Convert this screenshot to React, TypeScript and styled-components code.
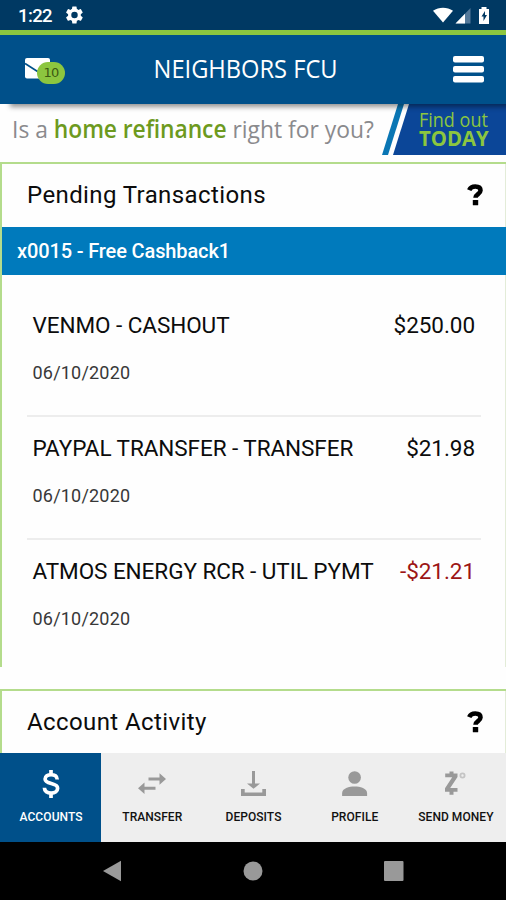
import React from 'react';
import styled, { createGlobalStyle, css } from 'styled-components';

const GlobalStyle = createGlobalStyle`
  * { box-sizing: border-box; }
  body { margin: 0; background: #fff; }
`;

const Screen = styled.div`
  display: flex;
  flex-direction: column;
  width: 506px;
  height: 900px;
  overflow: hidden;
  background: #fefefe;
  color: #0c0c0c;
  font-family: Roboto, sans-serif;
  white-space: nowrap;
`;

const StatusBar = styled.div`
  flex: none;
  height: 30px;
  display: flex;
  align-items: center;
  padding: 2px 15px 0 18px;
  background: #003963;
  color: #fff;
`;

const Clock = styled.span`
  width: 48px;
  font-size: 18.5px;
  line-height: 22px;
  font-weight: 500;
  letter-spacing: -0.6px;
`;

const StatusIcons = styled.div`
  display: flex;
  align-items: center;
  margin-left: auto;
`;

const Header = styled.header`
  flex: none;
  position: relative;
  z-index: 1;
  height: 74px;
  display: grid;
  grid-template-columns: 80px 1fr 100px;
  align-items: center;
  padding: 0 15px 0 25px;
  border-top: 5px solid #8cc63f;
  background: #00508a;
  box-shadow: 7px 6px 5px -3px rgba(0, 0, 0, 0.42);
`;

const Inbox = styled.div`
  position: relative;
  height: 24px;
  width: 40px;
`;

const InboxBadge = styled.span`
  position: absolute;
  left: 12px;
  top: 4px;
  width: 28px;
  height: 22px;
  border-radius: 11px;
  background: #8cc63f;
  color: #3c5a12;
  font: 13px/21px 'DejaVu Sans', sans-serif;
  text-align: center;
  letter-spacing: -0.8px;
`;

const Brand = styled.h1`
  margin: 0 0 4px;
  color: #fff;
  font: 400 26px/32px 'Open Sans', sans-serif;
  transform: translateX(-2.5px) scaleX(0.91);
  justify-self: center;
`;

const MenuButton = styled.button`
  justify-self: end;
  display: flex;
  padding: 0;
  margin-right: 7px;
  border: 0;
  background: none;
`;

const Banner = styled.div`
  flex: none;
  display: flex;
  height: 51px;
  margin-bottom: 7px;
`;

const scaled = css<{ $scale: number }>`
  transform: scaleX(${(p) => p.$scale});
  transform-origin: left;
`;

const BannerText = styled.div<{ $scale: number }>`
  width: 370px;
  padding: 9px 0 0;
  margin-left: 12px;
  color: #8a8a8d;
  font: 400 24.5px/32px 'Open Sans', sans-serif;
  ${scaled}
  b { color: #6d9a1e; font-weight: 600; letter-spacing: -0.1px; }
`;

const BannerStripe = styled.div`
  width: 26px;
  height: 51px;
  margin-right: -15px;
  background: #0a76b4;
  clip-path: polygon(16px 0, 22px 0, 6px 100%, 0 100%);
`;

const BannerCta = styled.div`
  flex: 1;
  display: flex;
  flex-direction: column;
  padding: 7px 0 0 26px;
  background: #0b4698;
  color: #8cc63f;
  clip-path: polygon(16px 0, 100% 0, 100% 100%, 0 100%);
`;

const CtaLine = styled.div<{ $scale: number; $bold?: boolean }>`
  width: max-content;
  font: ${(p) => (p.$bold ? 700 : 400)} ${(p) => (p.$bold ? 22 : 20)}px/17.5px 'Open Sans', sans-serif;
  ${scaled}
`;

const Card = styled.section<{ $height: number; $gap?: number }>`
  flex: none;
  height: ${(p) => p.$height}px;
  margin-top: ${(p) => p.$gap ?? 0}px;
  border: solid #b4dc8c;
  border-width: 2px 0 0 2px;
  box-shadow: inset -1px 0 #e3ecd8;
`;

const CardTitle = styled.div`
  display: flex;
  justify-content: space-between;
  align-items: center;
  height: 63px;
  padding: 0 22px 2px 25px;
`;

const TitleText = styled.h2`
  margin: 0;
  font-size: 24px;
  line-height: 30px;
  font-weight: 400;
  letter-spacing: 0.4px;
`;

const AccountBar = styled.div`
  height: 48px;
  padding: 0 15px;
  background: #007abc;
  color: #fff;
  font-size: 20px;
  line-height: 48px;
  font-weight: 500;
  letter-spacing: -0.13px;
`;

const Transactions = styled.ul`
  list-style: none;
  margin: 18px 25px 0 25px;
  padding: 0;
`;

const Transaction = styled.li`
  height: 123px;
  padding: 19px 6px 0 5.5px;
  & + & { border-top: 2px solid #ededed; padding-top: 18px; }
  &:first-child { height: 122px; }
`;

const TransactionLine = styled.div`
  display: flex;
  justify-content: space-between;
  font-size: 22.5px;
  line-height: 26px;
  letter-spacing: -0.06px;
`;

const Amount = styled.span<{ $negative?: boolean }>`
  letter-spacing: -0.05px;
  ${(p) => p.$negative && 'color: #9c1515;'}
`;

const TransactionDate = styled.div`
  margin-top: 24px;
  color: #383838;
  font-size: 18px;
  line-height: 22px;
  letter-spacing: 0.2px;
`;

const TabBar = styled.nav`
  flex: none;
  display: grid;
  grid-template-columns: repeat(5, 1fr);
  height: 89px;
`;

const Tab = styled.button<{ $active?: boolean }>`
  display: flex;
  flex-direction: column;
  align-items: center;
  padding: 15px 0 0;
  border: 0;
  background: ${(p) => (p.$active ? '#00508a' : '#eee')};
  color: ${(p) => (p.$active ? '#fff' : '#111')};
  font: 500 12px/18px Roboto, sans-serif;
  svg { display: block; margin-bottom: 8px; color: ${(p) => (p.$active ? '#fff' : '#999')}; }
`;

const TabLabel = styled.span<{ $active?: boolean }>`
  margin-left: 1px;
  letter-spacing: ${(p) => (p.$active ? '0.1px' : '0.05px')};
`;

const SystemNav = styled.div`
  flex: none;
  height: 58px;
  display: flex;
  align-items: center;
  justify-content: space-between;
  padding: 0 102.5px 0 102px;
  background: #000;
`;

const Help = () => (
  <svg width="17" height="24" viewBox="0 0 17 24" aria-label="Help">
    <path d="M2.200 7.200C3.400 4.400 5.600 3.500 8.300 3.500c3.200 0 5.200 1.500 5.200 4.100 0 3.400-5 3.700-5 7.200" fill="none" stroke="#000" strokeWidth="4.600" />
    <rect x="5.800" y="17" width="5.400" height="5.300" rx=".6" />
  </svg>
);

const rows = [
  { name: 'VENMO - CASHOUT', amount: '$250.00', date: '06/10/2020' },
  { name: 'PAYPAL TRANSFER - TRANSFER', amount: '$21.98', date: '06/10/2020' },
  { name: 'ATMOS ENERGY RCR - UTIL PYMT', amount: '-$21.21', date: '06/10/2020', negative: true },
];

const tabs = [
  {
    label: 'ACCOUNTS',
    icon: (
      <path d="M24.2 11.5c0-3.3-2.6-4.9-6.1-4.9s-6 1.7-6 4.4c0 6 12.5 3 12.5 9.2 0 3-2.7 4.9-6.4 4.9-4 0-6.8-2-6.8-5.3M18 2V7m0 18v5" fill="none" stroke="currentColor" strokeWidth="3.700" />
    ),
  },
  {
    label: 'TRANSFER',
    icon: (
      <path d="M14.500 9.500h11V5.200L32 11l-6.500 5.800v-4.400h-11zM21.500 21.700h-11V26L4 20.200l6.500-5.800v4.400h11z" fill="currentColor" />
    ),
  },
  {
    label: 'DEPOSITS',
    icon: (
      <path d="M17 3h3v12.500h5L18.500 20.800 12 15.500h5zM6 21h3.700v3.500h17.600V21H31v7H6z" fill="currentColor" />
    ),
  },
  {
    label: 'PROFILE',
    icon: (
      <g fill="currentColor" transform="translate(.6 0)">
        <circle cx="18" cy="9.500" r="6.300" />
        <path d="M5.500 28v-3c0-4.600 7-6.500 12.500-6.500s12.500 1.900 12.500 6.500v3z" />
      </g>
    ),
  },
  {
    label: 'SEND MONEY',
    icon: (
      <g>
        <path d="M8.200 5.500H12.500V3.500H16.500V5.500H20.500V9L13.200 20H20.500V23.800H16.500V26.800H12.500V23.800H8V20.300L15.200 9.200H8.200z" fill="currentColor" />
        <circle cx="25.500" cy="7.500" r="2.100" fill="none" stroke="#c4c4c4" strokeWidth="1.800" />
      </g>
    ),
  },
];

export default function App() {
  return (
    <Screen>
      <GlobalStyle />
      <StatusBar>
        <Clock>1:22</Clock>
        <svg width="17" height="18" viewBox="2 2.600 20 21.200" fill="#fff" overflow="visible">
          <path fillRule="evenodd" d="M19.400 13a7.500 7.500 0 0 0 0-2l2.100-1.600a.5.5 0 0 0 .1-.6l-2-3.500a.5.5 0 0 0-.6-.2l-2.500 1a7.300 7.300 0 0 0-1.700-1L14.400 2.400a.5.5 0 0 0-.5-.4h-4a.5.5 0 0 0-.5.4L9 5.100a7.300 7.300 0 0 0-1.700 1l-2.500-1a.5.5 0 0 0-.6.2l-2 3.500a.5.5 0 0 0 .1.600L4.500 11a7.500 7.500 0 0 0 0 2l-2.200 1.600a.5.5 0 0 0-.1.600l2 3.500c.1.200.4.300.6.200l2.500-1a7.300 7.300 0 0 0 1.700 1l.4 2.700c0 .2.200.4.500.4h4c.3 0 .5-.2.500-.4l.4-2.700a7.300 7.300 0 0 0 1.700-1l2.500 1c.2.100.5 0 .6-.2l2-3.500a.5.5 0 0 0-.1-.6zM12 15.800a3.800 3.800 0 1 1 0-7.600 3.800 3.800 0 0 1 0 7.600z" />
        </svg>
        <StatusIcons>
          <svg width="58" height="20" viewBox="0 0 58 20">
            <path d="M0 4.700c6-4 14-4 20 0L10 16.500z" fill="#fff" />
            <path d="M37.500 2v15.500h-15z" fill="#54799a" />
            <path d="M32 7.700v9.800h-9.500z" fill="#fff" />
            <path d="M46 3h2.500V1h5V3H56v15H46z" fill="#fff" />
            <path d="M52 5 48.500 10.500h2v4.500l3.500-6h-2z" fill="#003963" />
          </svg>
        </StatusIcons>
      </StatusBar>
      <Header>
        <Inbox>
          <svg width="26" height="22" viewBox="0 0 26 22">
            <rect width="25" height="20.500" rx="2" fill="#fff" />
            <path d="M0 5.500l12.500 8L25 5.500" fill="none" stroke="#00508a" strokeWidth="1.800" />
          </svg>
          <InboxBadge>10</InboxBadge>
        </Inbox>
        <Brand>NEIGHBORS FCU</Brand>
        <MenuButton aria-label="Menu">
          <svg width="31" height="27" viewBox="0 0 31 27" fill="#fff">
            <rect width="31" height="6.500" rx="2" />
            <rect y="10" width="31" height="6.500" rx="2" />
            <rect y="20" width="31" height="6.500" rx="2" />
          </svg>
        </MenuButton>
      </Header>
      <Banner>
        <BannerText $scale={0.933}>
          Is a <b>home refinance</b> right for you?
        </BannerText>
        <BannerStripe />
        <BannerCta>
          <CtaLine $scale={0.9}>Find out</CtaLine>
          <CtaLine $scale={0.925} $bold>TODAY</CtaLine>
        </BannerCta>
      </Banner>
      <Card $height={505}>
        <CardTitle>
          <TitleText>Pending Transactions</TitleText>
          <Help />
        </CardTitle>
        <AccountBar>x0015 - Free Cashback1</AccountBar>
        <Transactions>
          {rows.map((row) => (
            <Transaction key={row.name}>
              <TransactionLine>
                <span>{row.name}</span>
                <Amount $negative={row.negative}>{row.amount}</Amount>
              </TransactionLine>
              <TransactionDate>{row.date}</TransactionDate>
            </Transaction>
          ))}
        </Transactions>
      </Card>
      <Card $height={64} $gap={22}>
        <CardTitle>
          <TitleText>Account Activity</TitleText>
          <Help />
        </CardTitle>
      </Card>
      <TabBar>
        {tabs.map((tab, i) => (
          <Tab key={tab.label} $active={i === 0}>
            <svg width="36" height="32" viewBox="0 0 36 32">{tab.icon}</svg>
            <TabLabel $active={i === 0}>{tab.label}</TabLabel>
          </Tab>
        ))}
      </TabBar>
      <SystemNav>
        <svg width="20" height="22" viewBox="0 0 20 22"><path d="M1 11 19 .7v20.600z" fill="#999" /></svg>
        <svg width="20" height="20" viewBox="0 0 20 20"><circle cx="10" cy="10" r="9.500" fill="#999" /></svg>
        <svg width="20" height="20" viewBox="0 0 20 20"><rect width="19.500" height="20" rx="1" fill="#999" /></svg>
      </SystemNav>
    </Screen>
  );
}
